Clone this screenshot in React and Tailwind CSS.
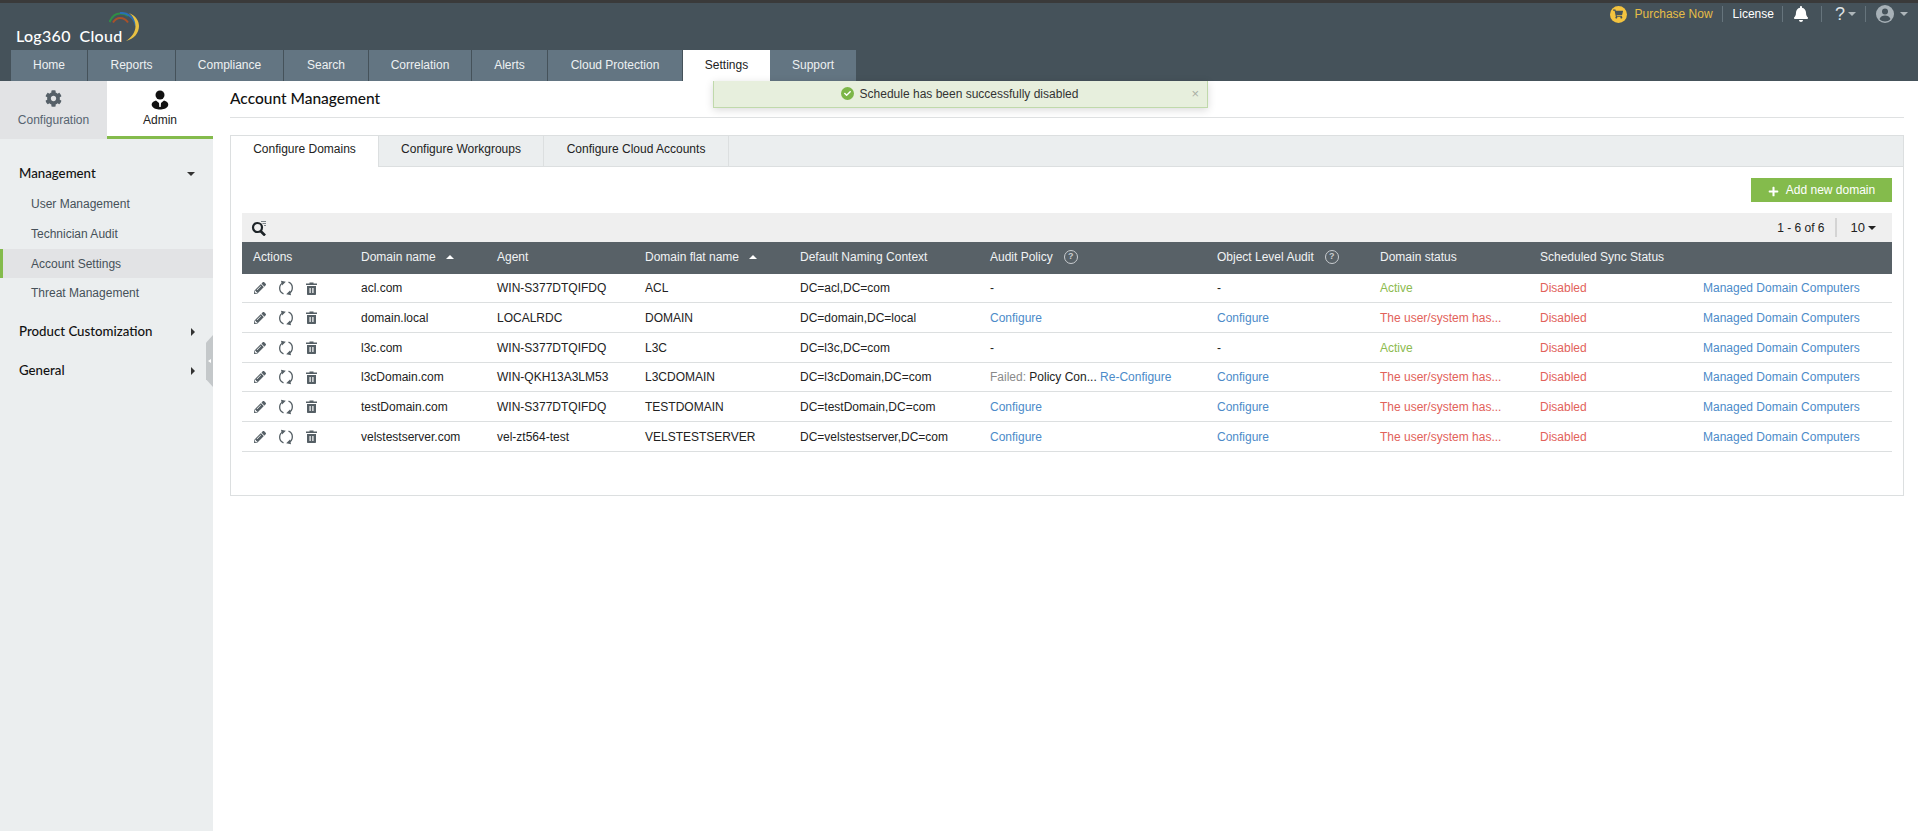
import { FaCog, FaBell, FaShoppingCart, FaPencilAlt, FaCheck, FaPlus } from 'react-icons/fa'

const NAV = [
  { label: 'Home', w: 'w-[77px]' },
  { label: 'Reports', w: 'w-[88px]' },
  { label: 'Compliance', w: 'w-[108px]' },
  { label: 'Search', w: 'w-[85px]' },
  { label: 'Correlation', w: 'w-[103px]' },
  { label: 'Alerts', w: 'w-[76px]' },
  { label: 'Cloud Protection', w: 'w-[135px]' },
  { label: 'Settings', w: 'w-[87px]', active: true },
  { label: 'Support', w: 'w-[87px]' },
]

const COLS = 'grid grid-cols-[108px_136px_148px_155px_190px_227px_163px_160px_163px_199px]'

const ROWS = [
  { name: 'acl.com', agent: 'WIN-S377DTQIFDQ', flat: 'ACL', ctx: 'DC=acl,DC=com', audit: '-', obj: '-', active: true, h: 'h-[29px]' },
  { name: 'domain.local', agent: 'LOCALRDC', flat: 'DOMAIN', ctx: 'DC=domain,DC=local', audit: 'Configure', obj: 'Configure', h: 'h-[30px]' },
  { name: 'l3c.com', agent: 'WIN-S377DTQIFDQ', flat: 'L3C', ctx: 'DC=l3c,DC=com', audit: '-', obj: '-', active: true, h: 'h-[30px]' },
  { name: 'l3cDomain.com', agent: 'WIN-QKH13A3LM53', flat: 'L3CDOMAIN', ctx: 'DC=l3cDomain,DC=com', failed: true, obj: 'Configure', h: 'h-[29px]' },
  { name: 'testDomain.com', agent: 'WIN-S377DTQIFDQ', flat: 'TESTDOMAIN', ctx: 'DC=testDomain,DC=com', audit: 'Configure', obj: 'Configure', h: 'h-[30px]' },
  { name: 'velstestserver.com', agent: 'vel-zt564-test', flat: 'VELSTESTSERVER', ctx: 'DC=velstestserver,DC=com', audit: 'Configure', obj: 'Configure', h: 'h-[30px]' },
]

function Logo() {
  return (
    <svg width="30" height="30" viewBox="0 0 30 30" fill="none" className="absolute left-[109px] top-[9px]">
      <path d="M0.500 10C3 4 7 1.500 11 1.500C14 1.500 17 2.500 19 4" stroke="#2f8f46" strokeWidth="2" />
      <path d="M4 10.500C6 7.500 8.500 6 11 6C14 6 17 7.500 19 10.500" stroke="#a9512a" strokeWidth="2" />
      <path d="M11 1C17 0.500 25 4 27 14" stroke="#2a6fb5" strokeWidth="2" />
      <path d="M20 1C27 4 30 9 30 14C30 21 25 27 17 29C23 25 26.500 20 26.500 14C26.500 9 24 4 20 1Z" fill="#e8c143" />
    </svg>
  )
}

function AdminIcon() {
  return (
    <svg width="20" height="20" viewBox="0 0 20 20" fill="#111">
      <circle cx="10" cy="5" r="4.500" />
      <path d="M6 10.500C2.500 11.500 1 13.500 2 16C3 18.500 7 19.500 10 19.500C13 19.500 17 18.500 18 16C19 13.500 17.500 11.500 14 10.500L11 13L10.700 17H9.300L9 13Z" />
    </svg>
  )
}

function SyncIcon() {
  return (
    <svg width="16" height="16" viewBox="0 0 16 16" fill="none" stroke="#555f65" strokeWidth="1.300">
      <path d="M5.800 2.500A6 6 0 0 0 5.500 13.800" />
      <path d="M10.200 13.500A6 6 0 0 0 10.500 2.200" />
      <path d="M3 0.800L7.800 1.800L4 5.500Z" fill="#555f65" stroke="none" />
      <path d="M13 15.200L8.200 14.200L12 10.500Z" fill="#555f65" stroke="none" />
    </svg>
  )
}

function TrashIcon() {
  return (
    <svg width="11" height="13" viewBox="0 0 11 13" fill="#555f65">
      <path d="M3.500 0.500H7.500V1.500H11V3H0V1.500H3.500Z" />
      <path d="M1 4H10V12C10 12.600 9.600 13 9 13H2C1.400 13 1 12.600 1 12ZM3.500 6V11H4.700V6ZM6.300 6V11H7.500V6Z" fillRule="evenodd" />
    </svg>
  )
}

function SearchListIcon() {
  return (
    <svg width="16" height="16" viewBox="0 0 16 16" fill="none" stroke="#1d2327">
      <circle cx="6.500" cy="7.500" r="4.500" strokeWidth="2.200" />
      <path d="M9.500 11L14 15.500" strokeWidth="2.600" />
      <path d="M10 1.500H15M11.500 3.500H15M13 5.500H15" strokeWidth="1" stroke="#7c8488" />
    </svg>
  )
}

function HelpIcon() {
  return (
    <span className="inline-flex h-[14px] w-[14px] items-center justify-center rounded-full border border-[#c9cdd0] text-[9px] font-bold leading-none text-[#c9cdd0]">?</span>
  )
}

function SortUp() {
  return <span className="ml-[10px] inline-block h-0 w-0 -translate-y-[2px] border-x-[4px] border-b-[4px] border-x-transparent border-b-white" />
}

function Divider() {
  return <span className="block h-[16px] w-px bg-[#66747c]" />
}

function Caret({ className }) {
  return <span className={`inline-block h-0 w-0 border-x-[4px] border-t-[4px] border-x-transparent ${className}`} />
}

function Arrow() {
  return <span className="inline-block h-0 w-0 border-y-[4px] border-l-[4px] border-y-transparent border-l-[#333]" />
}

function Header() {
  return (
    <div className="relative h-[81px] shrink-0 border-t-[3px] border-[#3a3a3a] bg-[#45525a]">
      <Logo />
      <span className="absolute left-[16px] top-[21px] text-[16px] font-medium tracking-[0.3px] text-white [font-family:Lato,sans-serif]">Log360&nbsp; Cloud</span>
      <div className="flex items-center justify-end pt-[2px] pr-[10px] text-[12px]">
        <span className="flex h-[17px] w-[17px] items-center justify-center rounded-full bg-[#f3c33f]">
          <FaShoppingCart className="text-[10px] text-[#45525a]" />
        </span>
        <span className="ml-[8px] text-[#e6bd47]">Purchase Now</span>
        <span className="ml-[9px]"><Divider /></span>
        <span className="ml-[10px] text-white">License</span>
        <span className="ml-[8px]"><Divider /></span>
        <FaBell className="ml-[10px] text-[16px] text-white" />
        <span className="ml-[12px]"><Divider /></span>
        <span className="ml-[13px] text-[18px] leading-none text-[#dfe3e5]">?</span>
        <Caret className="ml-[3px] border-t-[#aeb6ba]" />
        <span className="ml-[9px]"><Divider /></span>
        <svg width="18" height="18" viewBox="0 0 18 18" fill="#a7b1b7" className="ml-[10px]">
          <circle cx="9" cy="9" r="9" />
          <circle cx="9" cy="6.500" r="3" fill="#45525a" />
          <path d="M3.500 14C4.500 11.500 6.500 10.500 9 10.500C11.500 10.500 13.500 11.500 14.500 14C13 15.800 11 16.500 9 16.500C7 16.500 5 15.800 3.500 14Z" fill="#45525a" />
        </svg>
        <Caret className="ml-[6px] border-t-[#aeb6ba]" />
      </div>
      <nav className="absolute bottom-0 left-[11px] flex h-[31px]">
        {NAV.map(item => (
          <div
            key={item.label}
            className={`flex items-center justify-center pb-[2px] text-[12px] ${item.w} ${
              item.active ? 'bg-white text-[#222]' : 'border-r border-[#45525a] bg-[#637582] text-[#eef1f2]'
            }`}
          >
            {item.label}
          </div>
        ))}
      </nav>
    </div>
  )
}

function Sidebar() {
  return (
    <aside className="relative w-[213px] shrink-0 bg-[#ebeeef]">
      <div className="flex h-[58px]">
        <div className="flex w-[107px] flex-col items-center bg-[#e2e3e5] pt-[9px] text-[12px] text-[#566470]">
          <FaCog className="text-[17px] text-[#566068]" />
          <span className="mt-[4px]">Configuration</span>
        </div>
        <div className="flex w-[106px] flex-col items-center border-b-[3px] border-[#84bb4c] bg-white pt-[9px] text-[12px] text-[#222]">
          <AdminIcon />
          <span className="mt-[1px]">Admin</span>
        </div>
      </div>
      <div className="pt-[25px]">
        <div className="flex h-[20px] items-center justify-between pl-[19px] pr-[18px] text-[13.250px] font-medium text-[#111] [font-family:Lato,sans-serif]">
          Management
          <Caret className="border-t-[#333]" />
        </div>
        <div className="mt-[5px] text-[12px] text-[#465159]">
          <div className="flex h-[30px] items-center pl-[31px]">User Management</div>
          <div className="flex h-[30px] items-center pl-[31px]">Technician Audit</div>
          <div className="flex h-[29px] items-center border-l-[3px] border-[#84bb4c] bg-[#e2e3e5] pl-[28px]">Account Settings</div>
          <div className="flex h-[30px] items-center pl-[31px]">Threat Management</div>
        </div>
        <div className="mt-[14px] flex h-[20px] items-center justify-between pl-[19px] pr-[18px] text-[13.250px] font-medium text-[#111] [font-family:Lato,sans-serif]">
          Product Customization
          <Arrow />
        </div>
        <div className="mt-[19px] flex h-[20px] items-center justify-between pl-[19px] pr-[18px] text-[13.250px] font-medium text-[#111] [font-family:Lato,sans-serif]">
          General
          <Arrow />
        </div>
      </div>
      <div className="absolute right-0 top-[254px] flex h-[52px] w-[7px] items-center justify-center bg-[#c4c8ca] [clip-path:polygon(100%_0,100%_100%,0_85%,0_15%)]">
        <span className="h-0 w-0 border-y-[2.5px] border-r-[3px] border-y-transparent border-r-white" />
      </div>
    </aside>
  )
}

function Row({ row }) {
  return (
    <div className={`${COLS} ${row.h} items-center border-b border-[#dcdfe0] text-[12px] text-[#222] [&>div]:pl-[11px]`}>
      <div className="flex items-center text-[#555f65]">
        <FaPencilAlt className="ml-px text-[12px]" />
        <span className="ml-[12px]"><SyncIcon /></span>
        <span className="ml-[12px]"><TrashIcon /></span>
      </div>
      <div>{row.name}</div>
      <div>{row.agent}</div>
      <div>{row.flat}</div>
      <div>{row.ctx}</div>
      <div>
        {row.failed ? (
          <>
            <span className="text-[#8a8a8a]">Failed: </span>
            Policy Con... <span className="text-[#4c8bc9]">Re-Configure</span>
          </>
        ) : row.audit === '-' ? '-' : (
          <span className="text-[#4c8bc9]">{row.audit}</span>
        )}
      </div>
      <div className={row.obj === '-' ? '' : 'text-[#4c8bc9]'}>{row.obj}</div>
      <div className={row.active ? 'text-[#8dbb4f]' : 'text-[#e2625a]'}>
        {row.active ? 'Active' : 'The user/system has...'}
      </div>
      <div className="text-[#e2625a]">Disabled</div>
      <div className="whitespace-nowrap text-[#4c8bc9]">Managed Domain Computers</div>
    </div>
  )
}

function DomainPanel() {
  return (
    <div className="mt-[17px] h-[361px] border border-[#dcdfe0]">
      <div className="flex h-[31px] border-b border-[#dcdfe0] bg-[#ebeeef] text-[12px] text-[#222]">
        <div className="-mb-px flex w-[148px] items-center justify-center border-r border-[#dcdfe0] bg-white pb-[6px]">Configure Domains</div>
        <div className="flex w-[165px] items-center justify-center border-r border-[#dcdfe0] pb-[5px]">Configure Workgroups</div>
        <div className="flex w-[185px] items-center justify-center border-r border-[#dcdfe0] pb-[5px]">Configure Cloud Accounts</div>
      </div>
      <div className="px-[11px] pt-[11px]">
        <div className="flex justify-end">
          <div className="flex h-[24px] w-[141px] items-center justify-center bg-[#84bb4c] text-[12px] text-white">
            <FaPlus className="mr-[7px] mt-[2px] text-[11px]" />
            Add new domain
          </div>
        </div>
        <div className="mt-[11px] flex h-[29px] items-center justify-between bg-[#efefef] pl-[9px] pr-[16px] text-[12px] text-[#222]">
          <SearchListIcon />
          <div className="flex items-center">
            1 - 6 of 6
            <span className="ml-[10px] mr-[14px] h-[19px] w-[2px] bg-[#d4d4d4]" />
            <span className="text-[13px]">10</span>
            <Caret className="ml-[3px] border-t-[#222]" />
          </div>
        </div>
        <div className={`${COLS} h-[32px] items-center bg-[#586167] pb-[3px] text-[12px] text-[#f1f3f4] [&>div]:pl-[11px]`}>
          <div>Actions</div>
          <div>Domain name<SortUp /></div>
          <div>Agent</div>
          <div>Domain flat name<SortUp /></div>
          <div>Default Naming Context</div>
          <div className="flex items-center gap-[11px]">Audit Policy <HelpIcon /></div>
          <div className="flex items-center gap-[11px]">Object Level Audit <HelpIcon /></div>
          <div>Domain status</div>
          <div>Scheduled Sync Status</div>
          <div />
        </div>
        {ROWS.map(row => <Row key={row.name} row={row} />)}
      </div>
    </div>
  )
}

export default function App() {
  return (
    <div className="relative flex h-[831px] flex-col overflow-hidden bg-white [font-family:'Liberation_Sans',Arial,sans-serif]">
      <Header />
      <div className="flex flex-1">
        <Sidebar />
        <main className="flex-1 pl-[17px] pr-[14px]">
          <div className="flex h-[37px] items-center border-b border-[#dfe1e2] pb-[8px] pt-[7px] text-[15.500px] font-medium text-[#111] [font-family:Lato,sans-serif]">
            Account Management
          </div>
          <DomainPanel />
        </main>
      </div>
      {/* toast sits over the page header */}
      <div className="absolute left-[713px] top-[81px] flex h-[27px] w-[495px] items-center justify-center border border-t-0 border-[#c0d9ab] bg-[#e7efdd] pb-[1px] pr-[2px] text-[12px] text-[#333] shadow-[0_2px_8px_rgba(0,0,0,0.15)]">
        <span className="mr-[6px] flex h-[13px] w-[13px] items-center justify-center rounded-full bg-[#7cb648]">
          <FaCheck className="text-[7px] text-white" />
        </span>
        Schedule has been successfully disabled
        <span className="absolute right-[8px] text-[13px] leading-none text-[#aab0a6]">×</span>
      </div>
    </div>
  )
}
